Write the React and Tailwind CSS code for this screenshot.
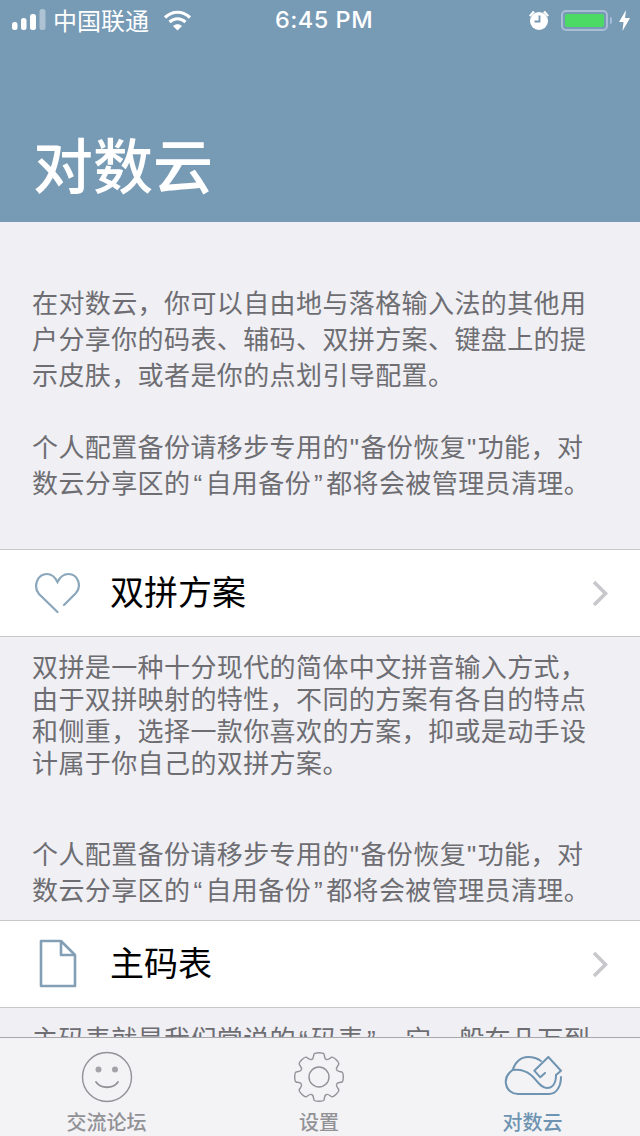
const cjk = { fontFamily: '"Noto Sans CJK SC", "Noto Sans", sans-serif' };
// curly quotes come out narrow from the latin font, as in the screenshot
const body = { fontFamily: '"Liberation Sans", "Noto Sans CJK SC", sans-serif' };

const gearTeeth = [0, 45, 90, 135, 180, 225, 270, 315];

function StatusBar() {
  return (
    <div className="flex h-[40px] items-center text-white">
      <div className="flex flex-1 items-center pl-3">
        <svg width="34" height="22" viewBox="0 0 34 22" fill="#fff">
          <rect x="0" y="13" width="5.5" height="8" rx="2.5" />
          <rect x="9" y="9" width="5.5" height="12" rx="2.5" />
          <rect x="18" y="5" width="6" height="16" rx="2.5" />
          <rect x="27.5" y="0" width="6" height="21" rx="2.5" opacity="0.4" />
        </svg>
        <span className="ml-[7px] text-[24px] leading-[40px]" style={cjk}>中国联通</span>
        <svg className="ml-[14px]" width="29" height="21" viewBox="0 0 29 21" fill="none" stroke="#fff" strokeWidth="3.2">
          <path d="M2 7.5C9.5 0.5 19.5 0.5 27 7.5" />
          <path d="M6.5 12C11.5 7.8 17.5 7.8 22.5 12" />
          <path d="M14.5 20.5L10 16C12.5 13.8 16.5 13.8 19 16Z" fill="#fff" stroke="none" />
        </svg>
      </div>
      <span className="pl-[6px] font-['Inter'] text-[23.5px] leading-[40px] font-medium tracking-[0.5px] whitespace-nowrap">6:45 PM</span>
      <div className="flex flex-1 items-center justify-end pr-[10px]">
        <svg width="22" height="22" viewBox="0 0 22 22" fill="#fff">
          <circle cx="11" cy="12" r="9" />
          <path d="M1 6.5L5 1.8L7 3.3L2.5 7.8ZM21 6.5L17 1.8L15 3.3L19.5 7.8Z" />
          <path d="M11.5 6.5V12.5H6.5" fill="none" stroke="#7598B5" strokeWidth="1.8" />
        </svg>
        <div className="ml-[11px] flex h-[21px] w-[47px] items-center rounded-[5px] border-[2px] border-[#a9bdd6] p-[2px]">
          <div className="h-full w-full rounded-[2px] bg-[#4cd964]" />
        </div>
        <div className="ml-[2px] h-[7px] w-[2px] rounded-r-sm bg-[#a9bdd6]" />
        <svg className="ml-[7px]" width="11" height="21" viewBox="0 0 11 21" fill="#fff">
          <path d="M7 0L0 12H4.5L3.5 21L11 8H6Z" />
        </svg>
      </div>
    </div>
  );
}

function Row({ icon, title }) {
  return (
    <div className="flex h-[88px] items-center border-y border-[#c8c8cc] bg-white">
      <div className="flex w-[110px] shrink-0 items-center justify-center pl-[5px]">{icon}</div>
      <span className="flex-1 pb-[5px] text-[34px] text-black" style={cjk}>{title}</span>
      <svg className="mr-[32px]" width="16" height="27" viewBox="0 0 16 27" fill="none" stroke="#c7c7cc" strokeWidth="3.6">
        <path d="M2 2L13.5 13.5L2 25" />
      </svg>
    </div>
  );
}

function Tab({ icon, label, active }) {
  return (
    <div className="flex flex-col items-center pt-[13px]">
      <div className="flex h-[52px] items-center justify-center">{icon}</div>
      <span className={`mt-[6px] text-[20px] leading-[26px] font-medium ${active ? "text-[#6f94b1]" : "text-[#929296]"}`} style={cjk}>
        {label}
      </span>
    </div>
  );
}

function Copy({ className, children }) {
  return (
    <div className={`pr-10 pl-8 text-[26px] tracking-[0.4px] text-[#6d6d72] ${className}`} style={body}>
      {children}
    </div>
  );
}

// quotes take a little more room in the screenshot than in Liberation Sans
const Curly = ({ children }) => <span className="mx-[3px]">{children}</span>;
const Straight = () => <span className="mx-[1px]">"</span>;

function BackupNote() {
  return (
    <p>
      个人配置备份请移步专用的<Straight />备份恢复<Straight />功能，对数云分享区的<Curly>“</Curly>自用备份<Curly>”</Curly>都将会被管理员清理。
    </p>
  );
}

export default function App() {
  return (
    <div className="relative h-[1136px] w-[640px] overflow-hidden bg-[#efeff4]" style={cjk}>
      <div className="h-[222px] bg-[#779ab5]">
        <StatusBar />
        <h1 className="pt-[88px] pl-[33px] text-[60px] leading-[70px] font-medium text-white">对数云</h1>
      </div>

      <Copy className="pt-[64px] pb-[47px] leading-[36px]">
        <p className="mb-[36px]">在对数云，你可以自由地与落格输入法的其他用户分享你的码表、辅码、双拼方案、键盘上的提示皮肤，或者是你的点划引导配置。</p>
        <BackupNote />
      </Copy>

      <Row
        title="双拼方案"
        icon={
          <svg width="48" height="42" viewBox="0 0 48 42" fill="none" stroke="#8aa6bb" strokeWidth="2.2" strokeLinecap="round">
            <path d="M23.5 40L5 22C-1 15 3 2 13 2C18 2 21 5 23.5 10C26 5 29 2 34.5 2C44 2 48 14 42 21L30 33" />
          </svg>
        }
      />

      <Copy className="pt-[15px] leading-[32px]">
        <p>双拼是一种十分现代的简体中文拼音输入方式，由于双拼映射的特性，不同的方案有各自的特点和侧重，选择一款你喜欢的方案，抑或是动手设计属于你自己的双拼方案。</p>
      </Copy>
      <Copy className="pt-[57px] pb-[11px] leading-[36px]">
        <BackupNote />
      </Copy>

      <Row
        title="主码表"
        icon={
          <svg width="38" height="50" viewBox="0 0 38 50" fill="none" stroke="#829fb6" strokeWidth="2.6" strokeLinejoin="round">
            <path d="M2 2H22L36 16V47H2Z" />
            <path d="M22 2V16H36" />
          </svg>
        }
      />

      <Copy className="pt-[16px] leading-[32px]">
        <p>主码表就是我们常说的<Curly>“</Curly>码表<Curly>”</Curly>，它一般在几万到</p>
      </Copy>

      {/* tab bar sits over the scrolled content */}
      <div className="absolute right-0 bottom-0 left-0 grid h-[99px] grid-cols-[213px_212px_215px] border-t border-[#a8a8ac] bg-[#f3f3f6]">
        <Tab
          label="交流论坛"
          icon={
            <svg width="52" height="52" viewBox="0 0 52 52" fill="none" stroke="#929296" strokeWidth="1.4">
              <circle cx="26" cy="26" r="24.5" />
              <circle cx="17.5" cy="18.5" r="3" fill="#a4a4a8" stroke="none" />
              <circle cx="34" cy="18.5" r="3" fill="#a4a4a8" stroke="none" />
              <path d="M15 31C20 38 32 38 37 31" strokeWidth="1.8" strokeLinecap="round" />
            </svg>
          }
        />
        <Tab
          label="设置"
          icon={
            <svg width="52" height="52" viewBox="0 0 52 52" fill="none" stroke="#929296" strokeWidth="1.4">
              {gearTeeth.map((deg) => (
                <path key={deg} transform={`rotate(${deg} 26 26)`} d="M18.7 8.5C21 7.5 20.5 4 21 3C22 1.3 30 1.3 31 3C31.5 4 31 7.5 33.3 8.5" />
              ))}
              <circle cx="26" cy="26" r="10" />
            </svg>
          }
        />
        <Tab
          active
          label="对数云"
          icon={
            <svg width="58" height="42" viewBox="0 0 58 42" fill="none" stroke="#6f94b1" strokeWidth="2" strokeLinejoin="round" strokeLinecap="round">
              <path d="M41 17L36.3 21.3L30.3 14.7L44.3 1L57 14.7L52 19" />
              <path d="M52 19C52 28 48 32 43 32C36 32 33 24 27 19C22 15 15 13 8.7 14" />
              <path d="M8.7 14C11 6 17 1 24 1C29 1 33 2 37 5" />
              <path d="M8.7 14C3 18 1 23 2 28C3 34 8 38 14 38H45C52 38 57 31 57 21" />
            </svg>
          }
        />
      </div>
    </div>
  );
}
